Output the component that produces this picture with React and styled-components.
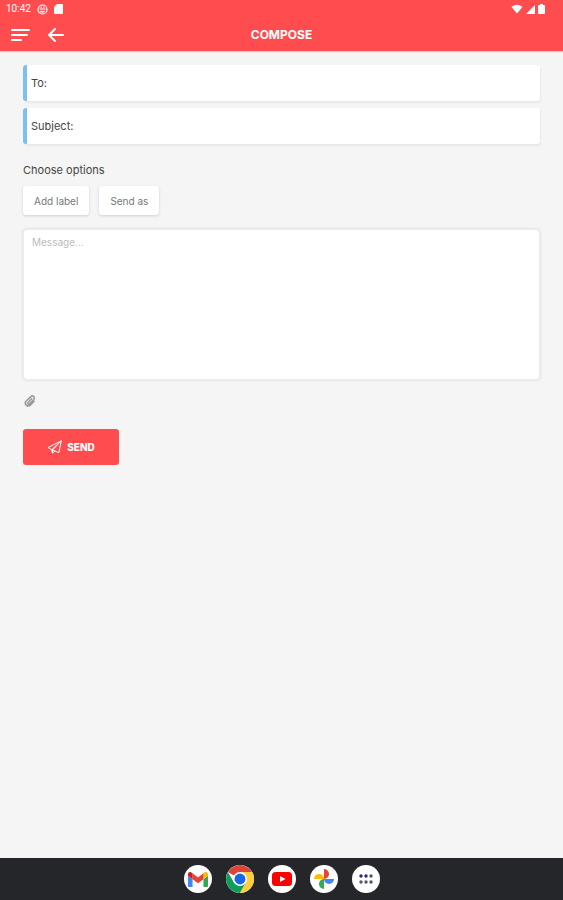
import React, { useState } from 'react';
import styled, { createGlobalStyle } from 'styled-components';

const GlobalStyle = createGlobalStyle`
  * {
    box-sizing: border-box;
  }

  body {
    margin: 0;
    background: #f5f5f5;
    color: #444;
    font-family: Inter, 'Liberation Sans', sans-serif;
    font-size: 11px;
    line-height: 16px;
  }

  button,
  input,
  textarea {
    font: inherit;
    color: inherit;
  }

  svg {
    display: block;
    flex: none;
  }
`;

const Page = styled.div`
  display: flex;
  flex-direction: column;
  min-height: 100vh;
`;

const HeaderBlock = styled.header`
  background: #ff4d4f;
  color: white;
  box-shadow: 0 1px 1px rgba(255, 77, 79, 0.3);
`;

const StatusBar = styled.div`
  display: flex;
  align-items: center;
  justify-content: space-between;
  height: 18px;
  padding: 0 18px 0 6px;
  font-family: Roboto, sans-serif;
  font-size: 10px;
`;

const StatusGroup = styled.div`
  display: flex;
  align-items: center;
  gap: ${props => props.$gap}px;
`;

const Toolbar = styled.div`
  display: grid;
  grid-template-columns: 1fr auto 1fr;
  align-items: center;
  height: 33px;
  padding: 0 10px;
`;

const ToolbarActions = styled.div`
  display: flex;
  gap: 16px;
`;

const IconButton = styled.button`
  display: flex;
  padding: 0;
  border: 0;
  background: none;
  color: ${props => props.$color || 'white'};
  cursor: pointer;
`;

const Title = styled.h1`
  margin: 0;
  font-size: 12px;
  font-weight: 700;
`;

const Form = styled.form`
  flex: 1;
  padding: 14px 23px;
`;

const Field = styled.label`
  display: flex;
  align-items: center;
  gap: 6px;
  height: 36px;
  margin-bottom: 7px;
  padding: 0 8px 0 4px;
  border-left: 4px solid #7cc0f0;
  border-radius: 3px;
  background: white;
  box-shadow: 1px 2px 2px rgba(0, 0, 0, 0.05);
`;

const FieldInput = styled.input`
  flex: 1;
  min-width: 0;
  padding: 0;
  border: 0;
  outline: none;
  background: none;
`;

const Options = styled.fieldset`
  margin: 18px 0 14px;
  padding: 0;
  border: 0;
`;

const OptionsTitle = styled.legend`
  margin-bottom: 8px;
  padding: 0;
`;

const OptionList = styled.div`
  display: flex;
  gap: 10px;
`;

const OptionButton = styled.button`
  height: 29px;
  padding: 0 11px;
  border: 0;
  border-radius: 3px;
  background: white;
  color: #777;
  font-size: 10px;
  box-shadow: 0 1px 3px rgba(0, 0, 0, 0.16);
  cursor: pointer;
`;

const Message = styled.textarea`
  display: block;
  width: 100%;
  height: 151px;
  padding: 4px 8px;
  border: 1px solid #ececec;
  border-radius: 4px;
  outline: none;
  background: white;
  box-shadow: 0 0 3px rgba(0, 0, 0, 0.14);
  font-size: 10px;
  resize: none;

  &::placeholder {
    color: #bbb;
    opacity: 1;
  }
`;

const Attachments = styled.div`
  padding: 14px 0 21px;
`;

const SendButton = styled.button`
  display: flex;
  align-items: center;
  justify-content: center;
  gap: 5px;
  width: 96px;
  height: 36px;
  padding: 0;
  border: 0;
  border-radius: 3px;
  background: #ff4d4f;
  color: white;
  font-size: 10px;
  font-weight: 800;
  cursor: pointer;
`;

const Dock = styled.nav`
  display: flex;
  align-items: center;
  justify-content: center;
  gap: 14px;
  height: 42px;
  background: #25262a;
`;

const DockItem = styled.button`
  display: flex;
  align-items: center;
  justify-content: center;
  width: 28px;
  height: 28px;
  padding: 0;
  border: 0;
  border-radius: 50%;
  background: white;
  cursor: pointer;
`;

const FaceIcon = () => (
  <svg width="11" height="11" viewBox="0 0 22 22" fill="none" stroke="white" strokeWidth="2.4">
    <circle cx="11" cy="11" r="9" />
    <path d="M5 10h12M7 14q4 4 8 0M7 6.500h3M12 6.500h3" />
  </svg>
);

const SdCardIcon = () => (
  <svg width="9" height="10" viewBox="0 0 18 20" fill="white">
    <path d="M6 0h10q2 0 2 2v16q0 2-2 2H2q-2 0-2-2V6z" />
  </svg>
);

const WifiIcon = () => (
  <svg width="12" height="10" viewBox="0 0 24 20" fill="white">
    <path d="M12 19 1 6Q12-3 23 6z" />
  </svg>
);

const SignalIcon = () => (
  <svg width="9" height="9" viewBox="0 0 18 18" fill="white">
    <path d="M18 0v18H0z" />
  </svg>
);

const BatteryIcon = () => (
  <svg width="7" height="10" viewBox="0 0 14 20" fill="white">
    <path d="M4 0h6v2h2q2 0 2 2v14q0 2-2 2H2q-2 0-2-2V4q0-2 2-2h2z" />
  </svg>
);

const MenuIcon = () => (
  <svg width="20" height="16" viewBox="0 0 20 16" stroke="white" strokeWidth="2" strokeLinecap="round">
    <path d="M2 3h17M2 8h15M2 13h9" />
  </svg>
);

const BackIcon = () => (
  <svg
    width="20"
    height="16"
    viewBox="0 0 20 16"
    fill="none"
    stroke="white"
    strokeWidth="2"
    strokeLinecap="round"
    strokeLinejoin="round"
  >
    <path d="M17 8H3M9 2 3 8l6 6" />
  </svg>
);

const ClipIcon = () => (
  <svg
    width="14"
    height="14"
    viewBox="0 0 24 24"
    fill="none"
    stroke="currentColor"
    strokeWidth="2.600"
    strokeLinecap="round"
    strokeLinejoin="round"
  >
    <path d="M15 8 8.500 14.500a1.600 1.600 0 0 0 2.500 2.500L18.500 9.500a3.500 3.500 0 0 0-5-5L5 12.500a5 5 0 0 0 7 7l7-7" />
  </svg>
);

const PlaneIcon = () => (
  <svg
    width="15"
    height="14"
    viewBox="0 0 30 28"
    fill="none"
    stroke="white"
    strokeWidth="2"
    strokeLinejoin="round"
    strokeLinecap="round"
  >
    <path d="M28 2 2 15l7 4zM28 2 11 20l12 5zM9 19l2 7V20M11 26l5-4" />
  </svg>
);

const GmailIcon = () => (
  <svg width="20" height="15" viewBox="52 42 88 66">
    <path fill="#4285f4" d="M58 108h14V74L52 59v43c0 3.300 2.700 6 6 6" />
    <path fill="#34a853" d="M120 108h14c3.300 0 6-2.700 6-6V59l-20 15" />
    <path fill="#fbbc04" d="M120 48v26l20-15v-8c0-7.400-8.500-11.600-14.400-7.200" />
    <path fill="#ea4335" d="M72 74V48l24 18 24-18v26L96 92" />
    <path fill="#c5221f" d="M52 51v8l20 15V48l-5.600-4.200C60.500 39.400 52 43.600 52 51" />
  </svg>
);

const ChromeIcon = () => (
  <svg width="28" height="28" viewBox="1 1 46 46">
    <path fill="#db4437" d="M24 24 4.100 12.500a23 23 0 0 1 39.800 0H24z" />
    <path fill="#0f9d58" d="M4.100 12.500a23 23 0 0 0 19.900 34.500L34 29.700 24 24 14 29.700z" />
    <path fill="#ffcd40" d="M43.900 12.500A23 23 0 0 1 24 47L34 29.700 24 12.500z" />
    <circle cx="24" cy="24" r="11.500" fill="white" />
    <circle cx="24" cy="24" r="9" fill="#1a66e8" />
  </svg>
);

const YoutubeIcon = () => (
  <svg width="20" height="14" viewBox="0 0 40 28">
    <rect width="40" height="28" rx="7" fill="#f00" />
    <path d="m16 8 11 6-11 6z" fill="white" />
  </svg>
);

const PhotosIcon = () => (
  <svg width="20" height="20" viewBox="0 0 40 40">
    <path fill="#ea4335" d="M20 0a10 10 0 0 1 0 20z" />
    <path fill="#4285f4" d="M40 20a10 10 0 0 1-20 0z" />
    <path fill="#34a853" d="M20 40a10 10 0 0 1 0-20z" />
    <path fill="#fbbc04" d="M0 20a10 10 0 0 1 20 0z" />
  </svg>
);

const AppsIcon = () => (
  <svg width="14" height="10" viewBox="0 0 14 10">
    {[2, 7, 12].map(x => (
      <g key={x}>
        <circle cx={x} cy="2" r="1.700" fill={x === 12 ? '#555566' : '#2b2380'} />
        <circle cx={x} cy="8" r="1.700" fill="#555566" />
      </g>
    ))}
  </svg>
);

const apps = [
  { name: 'Gmail', icon: <GmailIcon /> },
  { name: 'Chrome', icon: <ChromeIcon /> },
  { name: 'YouTube', icon: <YoutubeIcon /> },
  { name: 'Photos', icon: <PhotosIcon /> },
  { name: 'All apps', icon: <AppsIcon /> },
];

const Header = () => (
  <HeaderBlock>
    <StatusBar>
      <StatusGroup $gap={6}>
        <span>10:42</span>
        <FaceIcon />
        <SdCardIcon />
      </StatusGroup>
      <StatusGroup $gap={3}>
        <WifiIcon />
        <SignalIcon />
        <BatteryIcon />
      </StatusGroup>
    </StatusBar>
    <Toolbar>
      <ToolbarActions>
        <IconButton type="button" aria-label="Menu">
          <MenuIcon />
        </IconButton>
        <IconButton type="button" aria-label="Back">
          <BackIcon />
        </IconButton>
      </ToolbarActions>
      <Title>COMPOSE</Title>
    </Toolbar>
  </HeaderBlock>
);

const App = () => {
  const [form, setForm] = useState({ to: '', subject: '', message: '' });

  const onChange = e => {
    setForm({ ...form, [e.target.name]: e.target.value });
  };

  return (
    <>
      <GlobalStyle />
      <Page>
        <Header />
        <Form onSubmit={e => e.preventDefault()}>
          <Field>
            To:
            <FieldInput name="to" value={form.to} onChange={onChange} />
          </Field>
          <Field>
            Subject:
            <FieldInput name="subject" value={form.subject} onChange={onChange} />
          </Field>
          <Options>
            <OptionsTitle>Choose options</OptionsTitle>
            <OptionList>
              <OptionButton type="button">Add label</OptionButton>
              <OptionButton type="button">Send as</OptionButton>
            </OptionList>
          </Options>
          <Message
            name="message"
            aria-label="Message"
            placeholder="Message..."
            value={form.message}
            onChange={onChange}
          />
          <Attachments>
            <IconButton type="button" aria-label="Attach file" $color="#999">
              <ClipIcon />
            </IconButton>
          </Attachments>
          <SendButton type="submit">
            <PlaneIcon />
            SEND
          </SendButton>
        </Form>
        <Dock>
          {apps.map(app => (
            <DockItem key={app.name} type="button" aria-label={app.name}>
              {app.icon}
            </DockItem>
          ))}
        </Dock>
      </Page>
    </>
  );
};

export default App;
